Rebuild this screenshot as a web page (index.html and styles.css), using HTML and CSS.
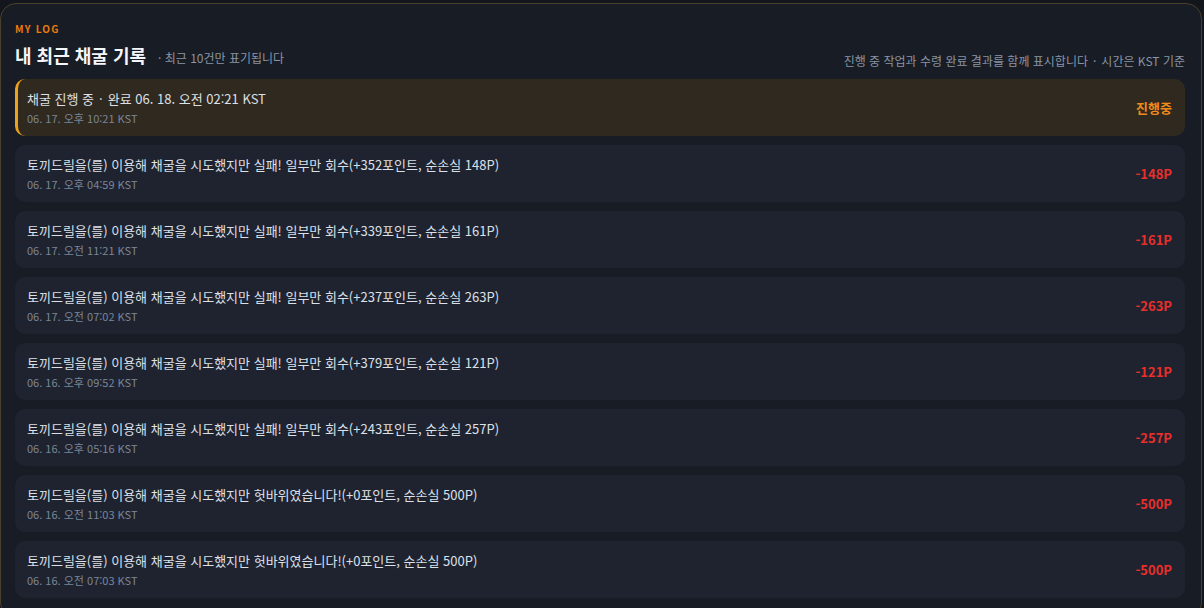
FILE: index.html
```html
<!DOCTYPE html>
<html lang="ko">
<head>
    <meta charset="UTF-8">
    <meta name="viewport" content="width=device-width, initial-scale=1.0">
    <title>내 최근 채굴 기록</title>
    <link rel="stylesheet" href="styles.css">
</head>
<body>
    <section class="log-panel">
        <header class="log-head">
            <p class="eyebrow">MY LOG</p>
            <div class="title-row">
                <div class="title-left">
                    <h1>내 최근 채굴 기록</h1>
                    <span class="hint">· 최근 10건만 표기됩니다</span>
                </div>
                <p class="note">진행 중 작업과 수령 완료 결과를 함께 표시합니다<span class="dot">·</span>시간은 KST 기준</p>
            </div>
        </header>

        <ul class="log-list">
            <li class="log-item running">
                <div class="log-text">
                    <p class="log-title">채굴 진행 중<span class="dot">·</span>완료 06. 18. 오전 02:21 KST</p>
                    <p class="log-date">06. 17. 오후 10:21 KST</p>
                </div>
                <span class="log-amount">진행중</span>
            </li>
            <li class="log-item">
                <div class="log-text">
                    <p class="log-title">토끼드릴을(를) 이용해 채굴을 시도했지만 실패! 일부만 회수(+352포인트, 순손실 148P)</p>
                    <p class="log-date">06. 17. 오후 04:59 KST</p>
                </div>
                <span class="log-amount">-148P</span>
            </li>
            <li class="log-item">
                <div class="log-text">
                    <p class="log-title">토끼드릴을(를) 이용해 채굴을 시도했지만 실패! 일부만 회수(+339포인트, 순손실 161P)</p>
                    <p class="log-date">06. 17. 오전 11:21 KST</p>
                </div>
                <span class="log-amount">-161P</span>
            </li>
            <li class="log-item">
                <div class="log-text">
                    <p class="log-title">토끼드릴을(를) 이용해 채굴을 시도했지만 실패! 일부만 회수(+237포인트, 순손실 263P)</p>
                    <p class="log-date">06. 17. 오전 07:02 KST</p>
                </div>
                <span class="log-amount">-263P</span>
            </li>
            <li class="log-item">
                <div class="log-text">
                    <p class="log-title">토끼드릴을(를) 이용해 채굴을 시도했지만 실패! 일부만 회수(+379포인트, 순손실 121P)</p>
                    <p class="log-date">06. 16. 오후 09:52 KST</p>
                </div>
                <span class="log-amount">-121P</span>
            </li>
            <li class="log-item">
                <div class="log-text">
                    <p class="log-title">토끼드릴을(를) 이용해 채굴을 시도했지만 실패! 일부만 회수(+243포인트, 순손실 257P)</p>
                    <p class="log-date">06. 16. 오후 05:16 KST</p>
                </div>
                <span class="log-amount">-257P</span>
            </li>
            <li class="log-item">
                <div class="log-text">
                    <p class="log-title">토끼드릴을(를) 이용해 채굴을 시도했지만 헛바위였습니다!(+0포인트, 순손실 500P)</p>
                    <p class="log-date">06. 16. 오전 11:03 KST</p>
                </div>
                <span class="log-amount">-500P</span>
            </li>
            <li class="log-item">
                <div class="log-text">
                    <p class="log-title">토끼드릴을(를) 이용해 채굴을 시도했지만 헛바위였습니다!(+0포인트, 순손실 500P)</p>
                    <p class="log-date">06. 16. 오전 07:03 KST</p>
                </div>
                <span class="log-amount">-500P</span>
            </li>
        </ul>
    </section>
</body>
</html>
```

FILE: styles.css
```css
* {
    margin: 0;
    padding: 0;
    box-sizing: border-box;
}

body {
    background: #13161d;
    font-family: "Noto Sans CJK KR", "Noto Sans", sans-serif;
    color: #d9dde5;
    overflow: hidden;
}

.log-panel {
    width: 1202px;
    margin-top: 3px;
    padding: 19px 16px 20px 14px;
    background: #181c25;
    border: 1px solid #4a3f2b;
    border-radius: 16px;
}

.eyebrow {
    font-size: 10px;
    line-height: 12px;
    font-weight: 700;
    letter-spacing: 1.2px;
    color: #ea7a10;
}

.title-row {
    display: flex;
    justify-content: space-between;
    align-items: flex-end;
    margin-top: 7px;
}

.title-left {
    display: flex;
    align-items: baseline;
    gap: 12px;
}

.title-left h1 {
    font-size: 18px;
    line-height: 26px;
    font-weight: 700;
    color: #f4f6fa;
}

.hint {
    font-size: 12px;
    color: #8a94a4;
}

.note {
    font-size: 12px;
    line-height: 18px;
    color: #8a94a4;
    margin-bottom: -2px;
}

.dot {
    margin: 0 5px;
}

.log-list {
    list-style: none;
    display: flex;
    flex-direction: column;
    gap: 9px;
    margin-top: 11px;
}

.log-item {
    display: flex;
    align-items: center;
    justify-content: space-between;
    padding: 10px 13px 10px 12px;
    background: #1f2330;
    border-radius: 10px;
}

.log-item.running {
    background: #30291f;
    border-left: 3px solid #f0a11a;
    padding-left: 9px;
}

.log-title {
    font-size: 13px;
    line-height: 20px;
    color: #dce0e8;
}

.log-date {
    font-size: 11px;
    line-height: 16px;
    margin-top: 1px;
    color: #7c8696;
}

.log-amount {
    font-size: 13px;
    font-weight: 700;
    color: #ea2f2a;
}

.running .log-amount {
    color: #f08a1a;
}
```
